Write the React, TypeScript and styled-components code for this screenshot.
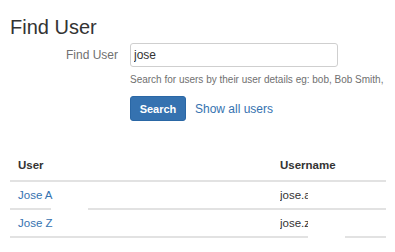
import React from 'react';
import styled, { createGlobalStyle } from 'styled-components';

const GlobalStyle = createGlobalStyle`
    body {
        margin: 0;
        background: #fff;
        font-family: "Liberation Sans", Arial, sans-serif;
        color: #333;
    }
`;

const StyledPage = styled.div`
    padding: 15px 9px 0 10px;
`;

const StyledTitle = styled.h1`
    margin: 0;
    font-size: 20px;
    line-height: 24px;
    font-weight: normal;
    color: #333;
`;

const StyledForm = styled.form`
    display: grid;
    grid-template-columns: 108px 208px;
    column-gap: 12px;
    margin-top: 4px;
`;

const StyledLabel = styled.label`
    text-align: right;
    font-size: 12px;
    line-height: 24px;
    color: #707070;
`;

const StyledInput = styled.input`
    box-sizing: border-box;
    width: 208px;
    height: 24px;
    border: 1px solid #cfcfcf;
    border-radius: 3px;
    padding: 0 3px;
    font-family: inherit;
    font-size: 12px;
    color: #333;
    outline: none;
`;

const StyledHelp = styled.div`
    grid-column: 2;
    margin-top: 6px;
    font-size: 10px;
    line-height: 14px;
    color: #707070;
    white-space: nowrap;
`;

const StyledActions = styled.div`
    grid-column: 2;
    display: flex;
    align-items: center;
    gap: 9px;
    margin-top: 9px;
`;

const StyledButton = styled.button`
    box-sizing: border-box;
    height: 25px;
    width: 56px;
    padding: 0;
    border: 1px solid #2a67a5;
    border-radius: 3px;
    background: #3572b0;
    color: #fff;
    font-family: inherit;
    font-size: 11px;
    font-weight: bold;
`;

const StyledLink = styled.a`
    font-size: 12px;
    color: #3572b0;
    text-decoration: none;
`;

const StyledTable = styled.table`
    width: 376px;
    margin-top: 29px;
    border-collapse: collapse;
    font-size: 11.5px;
`;

const StyledHead = styled.th`
    text-align: left;
    padding: 7px 8px;
    line-height: 16px;
    font-weight: bold;
    color: #333;
    border-bottom: 2px solid #e2e2e2;
`;

const StyledCell = styled.td`
    position: relative;
    padding: 6px 8px;
    line-height: 14px;
    color: #333;
    border-bottom: 2px solid #e2e2e2;
    width: ${props => props.$width || 'auto'};
`;

const StyledUserLink = styled.a`
    color: #3572b0;
    text-decoration: none;
`;

const StyledClipped = styled.span`
    display: inline-block;
    vertical-align: top;
    width: 28px;
    overflow: hidden;
    white-space: nowrap;
`;

// white boxes that hide part of the row rule
const StyledMask = styled.span`
    position: absolute;
    top: 20px;
    bottom: -2px;
    left: ${props => props.$left}px;
    width: ${props => props.$width}px;
    background: #fff;
`;

const users = [
    { name: 'Jose A', username: 'jose.alvarez', nameMask: true, userMask: false },
    { name: 'Jose Z', username: 'jose.zapata', nameMask: false, userMask: true },
];

const App = () => {
    return (
        <StyledPage>
            <GlobalStyle />
            <StyledTitle>Find User</StyledTitle>
            <StyledForm onSubmit={e => e.preventDefault()}>
                <StyledLabel>Find User</StyledLabel>
                <StyledInput defaultValue="jose" />
                <StyledHelp>Search for users by their user details eg: bob, Bob Smith,</StyledHelp>
                <StyledActions>
                    <StyledButton type="submit">Search</StyledButton>
                    <StyledLink href="#">Show all users</StyledLink>
                </StyledActions>
            </StyledForm>
            <StyledTable>
                <thead>
                    <tr>
                        <StyledHead>User</StyledHead>
                        <StyledHead>Username</StyledHead>
                    </tr>
                </thead>
                <tbody>
                    {users.map(user => (
                        <tr key={user.username}>
                            <StyledCell $width="246px">
                                <StyledUserLink href="#">{user.name}</StyledUserLink>
                                {user.nameMask && <StyledMask $left={41} $width={37} />}
                            </StyledCell>
                            <StyledCell>
                                <StyledClipped>{user.username}</StyledClipped>
                                {user.userMask && <StyledMask $left={36} $width={37} />}
                            </StyledCell>
                        </tr>
                    ))}
                </tbody>
            </StyledTable>
        </StyledPage>
    );
};

export default App;
